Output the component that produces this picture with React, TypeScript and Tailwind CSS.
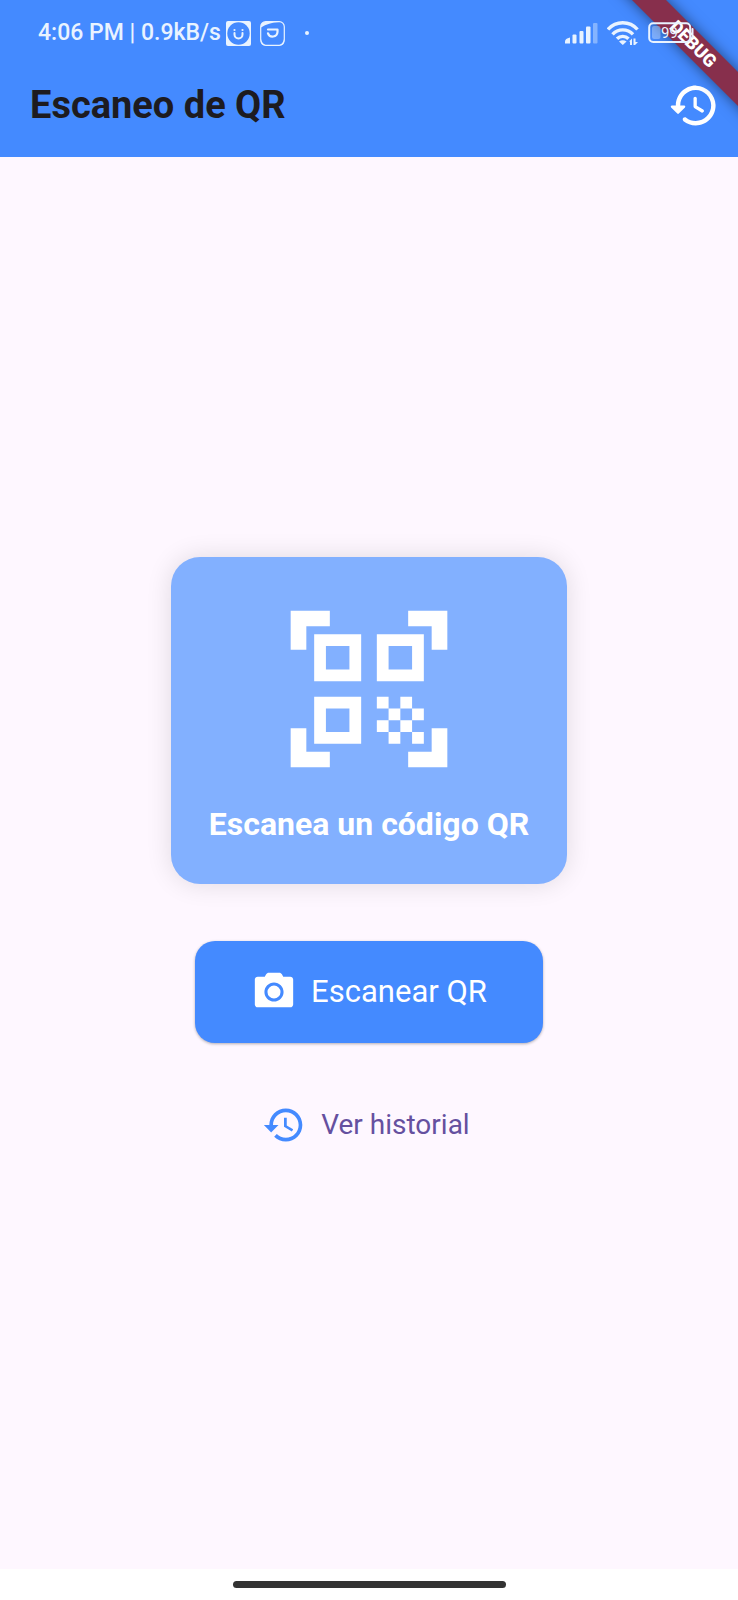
import React from "react";

const HISTORY =
  "M13 3c-4.97 0-9 4.03-9 9H1l3.89 3.89.07.14L9 12H6c0-3.87 3.13-7 7-7s7 3.13 7 7-3.13 7-7 7c-1.93 0-3.68-.79-4.94-2.06l-1.42 1.42C8.27 19.99 10.51 21 13 21c4.97 0 9-4.03 9-9s-4.03-9-9-9zm-1 5v5l4.28 2.54.72-1.21-3.5-2.08V8H12z";

const HISTORY_ROUNDED =
  "M13.26 3C8.17 2.86 4 6.95 4 12H2.21c-.45 0-.67.54-.35.85l2.79 2.8c.2.2.51.2.71 0l2.79-2.8c.31-.31.09-.85-.36-.85H6c0-3.9 3.18-7.05 7.1-7 3.72.05 6.85 3.18 6.9 6.9.05 3.91-3.1 7.1-7 7.1-1.61 0-3.1-.55-4.28-1.48-.4-.31-.96-.28-1.32.08-.42.42-.39 1.13.08 1.49C9 20.29 10.91 21 13 21c5.05 0 9.14-4.17 9-9.26-.13-4.69-4.05-8.61-8.74-8.74zm-.51 5c-.41 0-.75.34-.75.75v3.68c0 .35.19.68.49.86l3.12 1.85c.36.21.82.09 1.03-.26.21-.36.09-.82-.26-1.03l-2.88-1.71v-3.4c-.01-.4-.34-.74-.75-.74z";

const CAMERA =
  "M20.500 4h-3.670l-.7-1.200c-.3-.5-.8-.8-1.400-.8H9.300c-.6 0-1.100.3-1.400.8L7.170 4H3.500C2.700 4 2 4.700 2 5.500v13c0 .8.7 1.500 1.500 1.500h17c.8 0 1.500-.7 1.500-1.500v-13c0-.8-.7-1.500-1.500-1.500zM12 17c-2.760 0-5-2.240-5-5s2.240-5 5-5 5 2.240 5 5-2.240 5-5 5zM8.600 12a3.400 3.400 0 1 0 6.800 0a3.400 3.400 0 1 0-6.800 0z";

const QR_SCANNER =
  "M9.5,6.5v3h-3v-3H9.5 M11,5H5v6h6V5L11,5z M9.5,14.5v3h-3v-3H9.5 M11,13H5v6h6V13L11,13z M17.5,6.5v3h-3v-3H17.5 M19,5h-6v6h6V5L19,5z M13,13h1.5v1.5H13V13z M14.5,14.5H16V16h-1.5V14.5z M16,13h1.5v1.5H16V13z M13,16h1.5v1.5H13V16z M14.5,17.5H16V19h-1.5V17.5z M16,16h1.5v1.5H16V16z M17.5,14.5H19V16h-1.5V14.5z M17.5,17.5H19V19h-1.5V17.5z M22,7h-2V4h-3V2h5V7z M22,22v-5h-2v3h-3v2H22z M2,22h5v-2H4v-3H2V22z M2,2v5h2V4h3V2H2z";

function Icon({ path, className }: { path: string; className: string }) {
  return (
    <svg viewBox="0 0 24 24" fill="currentColor" fillRule="evenodd" aria-hidden="true" className={className}>
      <path d={path} />
    </svg>
  );
}

function StatusBar() {
  return (
    <div className="relative z-20 flex h-[66px] items-center justify-between pr-11 pl-[38px] text-[#e9f3ff]">
      <div className="flex items-center">
        <span className="text-[23px] leading-7 font-medium whitespace-nowrap">4:06 PM | 0.9kB/s</span>
        <svg viewBox="0 0 25 25" className="ml-[5px] size-[25px]" aria-hidden="true">
          <rect width="25" height="25" rx="2" fill="currentColor" />
          <circle cx="12.5" cy="12.5" r="11.2" fill="#448aff" />
          <path d="M8.500 12v1.500a4 4 0 0 0 8 0V12" fill="none" stroke="currentColor" strokeWidth="2" strokeLinecap="round" />
          <circle cx="8.5" cy="9" r="1.1" fill="currentColor" />
          <circle cx="16.5" cy="9" r="1.1" fill="currentColor" />
        </svg>
        <svg viewBox="0 0 25 25" className="ml-[9px] size-[25px]" aria-hidden="true">
          <rect x="0.7" y="0.7" width="23.6" height="23.6" rx="5" fill="none" stroke="currentColor" strokeWidth="1.2" />
          <path d="M1 6.500V5q0-4 4-4h14C12 1.500 6 3 1 6.500zM1 18q1 5 5 6.200H5q-4 0-4-4zM24 18q-1 5-5 6.200h1q4 0 4-4z" fill="currentColor" />
          <path d="M8 8.500h9.500v2.500a4.900 4.900 0 0 1-9.500 1.300" fill="none" stroke="currentColor" strokeWidth="2.2" strokeLinejoin="round" strokeLinecap="round" />
        </svg>
        <span className="ml-5 size-1 rounded-full bg-current" />
      </div>
      <div className="flex items-center">
        <svg viewBox="0 0 33 22" className="h-[22px] w-[33px]" fill="currentColor" aria-label="Señal móvil">
          <path d="M0 21.500v-2q0-3 5-4v6z" />
          <rect x="7.5" y="12.5" width="4" height="9" rx="1" />
          <rect x="14.5" y="9" width="4" height="12.5" rx="1" />
          <rect x="21" y="4.5" width="4.5" height="17" rx="1" />
          <rect x="28" y="1" width="4.5" height="20.5" rx="1" opacity="0.4" />
        </svg>
        <svg viewBox="0 0 32 24" className="ml-[9px] h-6 w-8" aria-label="Wi-Fi">
          <g fill="none" stroke="currentColor" strokeWidth="3.4">
            <path d="M1 8.500a19.500 19.500 0 0 1 29.500 0" />
            <path d="M5.500 13.300a14 14 0 0 1 20.500 0" />
            <path d="M10 17.800a8 8 0 0 1 11.500 0" />
          </g>
          <path d="M12 20.500q3.800-2.500 7.600 0l-3.800 3.500z" fill="currentColor" />
          <path d="M22 20.500L25 17.500v6.500h-2v-3.500zM26.500 17.500H28.500v3.500h2.500L28 24h-1.500z" fill="currentColor" />
        </svg>
        <svg viewBox="0 0 46 22" className="ml-[9px] h-[22px] w-[46px]" aria-label="Batería">
          <rect x="1.2" y="1.2" width="41" height="18.8" rx="4" fill="none" stroke="currentColor" strokeWidth="2" />
          <rect x="4" y="4" width="8.5" height="13" rx="2" fill="currentColor" opacity="0.35" />
          <path d="M44.500 7v8" stroke="currentColor" strokeWidth="2" strokeLinecap="round" />
          <text x="21.5" y="16" textAnchor="middle" fontSize="15" fill="currentColor">99</text>
        </svg>
      </div>
    </div>
  );
}

function DebugBanner() {
  return (
    <div className="pointer-events-none absolute top-0 right-0 z-10 size-40 overflow-hidden" aria-hidden="true">
      <div className="absolute top-[32px] -right-[50px] flex h-6 w-[190px] rotate-45 items-center justify-center bg-[#872f4c] text-[18px] leading-6 font-black text-white shadow-[0_0_14px_rgba(0,0,0,0.5)]">
        DEBUG
      </div>
    </div>
  );
}

export default function App() {
  return (
    <div className="relative flex min-h-screen flex-col bg-[#fef7ff] font-[Roboto,sans-serif]">
      <header className="bg-[#448aff] pb-[13px]">
        <StatusBar />
        <div className="flex h-[78px] items-center justify-between pr-[18px] pl-[30px]">
          <h1 className="text-[38px] leading-[48px] font-bold text-[#1d1b20]">Escaneo de QR</h1>
          <button type="button" aria-label="Historial" className="text-white">
            <Icon path={HISTORY_ROUNDED} className="size-[53px]" />
          </button>
        </div>
      </header>

      <main className="flex flex-1 flex-col items-center justify-center pb-[18px]">
        <section className="flex flex-col items-center rounded-[29px] bg-[#82b0ff] p-[38px] text-white shadow-[0_0_26px_rgba(0,0,0,0.12)]">
          <Icon path={QR_SCANNER} className="size-[188px]" />
          <h2 className="mt-5 text-[32px] leading-[43px] font-bold whitespace-nowrap">Escanea un código QR</h2>
        </section>
        <button type="button" className="mt-[57px] flex h-[102px] items-center gap-[14px] rounded-[20px] bg-[#448aff] px-14 text-[31px] leading-10 text-white shadow-[0_1px_3px_rgba(0,0,0,0.3)]">
          <Icon path={CAMERA} className="size-[46px]" />
          Escanear QR
        </button>
        <button type="button" className="mt-14 flex h-[52px] items-center gap-[15px] pr-[6px] text-[28px] leading-9 text-[#65509f]">
          <Icon path={HISTORY} className="size-11 text-[#448aff]" />
          Ver historial
        </button>
      </main>

      <footer className="flex h-[31px] items-center justify-center bg-white">
        <div className="h-[7px] w-[273px] rounded-full bg-[#333333]" />
      </footer>
      <DebugBanner />
    </div>
  );
}
